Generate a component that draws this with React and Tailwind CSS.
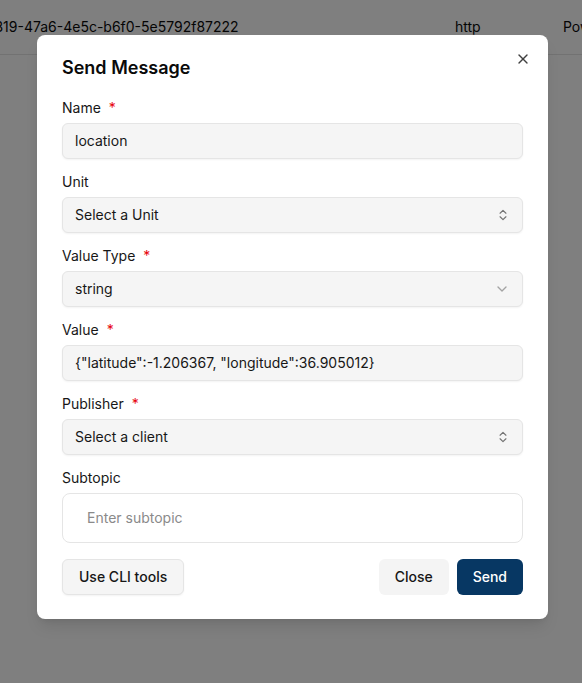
import React from 'react'
import { X, ChevronsUpDown, ChevronDown } from 'lucide-react'

function Label({ children, required }) {
  return (
    <label className="flex items-center gap-2 text-sm font-normal leading-5 text-[#171717]">
      {children}
      {required && <span className="text-red-600">*</span>}
    </label>
  )
}

function Field({ label, required, children }) {
  return (
    <div className="flex flex-col gap-[5px]">
      <Label required={required}>{label}</Label>
      {children}
    </div>
  )
}

function Box({ children, icon }) {
  return (
    <div className="flex h-9 items-center justify-between rounded-md border border-[#e5e5e5] bg-[#f5f5f5] px-3 text-sm text-[#171717] shadow-xs">
      <span>{children}</span>
      {icon}
    </div>
  )
}

export default function App() {
  return (
    <div className="relative h-[683px] w-[582px] overflow-hidden bg-white font-['Inter',sans-serif] text-[#0a0a0a]">
      {/* page behind the dialog */}
      <div className="flex h-[55px] items-center overflow-hidden border-b border-[#e5e5e5] text-sm">
        <span className="-ml-[47px] w-[300px] shrink-0 whitespace-nowrap">0a4c7319-47a6-4e5c-b6f0-5e5792f87222</span>
        <span className="ml-[202px] w-[108px] shrink-0">http</span>
        <span className="shrink-0 whitespace-nowrap">Power</span>
      </div>

      <div className="absolute inset-0 bg-black/50" />

      <div className="absolute left-[37px] top-[35px] w-[511px] rounded-lg bg-white px-[25px] pb-6 pt-[21px] shadow-lg">
        <button className="absolute right-[17px] top-[16px] text-[#404040]">
          <X size={16} strokeWidth={2} />
        </button>
        <h2 className="text-lg font-semibold leading-6 text-[#0a0a0a]">Send Message</h2>

        <div className="mt-[18px] flex flex-col gap-[13px]">
          <Field label="Name" required>
            <Box>location</Box>
          </Field>
          <Field label="Unit">
            <Box icon={<ChevronsUpDown size={14} className="text-[#737373]" />}>Select a Unit</Box>
          </Field>
          <Field label="Value Type" required>
            <Box icon={<ChevronDown size={16} className="text-[#a3a3a3]" />}>string</Box>
          </Field>
          <Field label="Value" required>
            <Box>{'{"latitude":-1.206367, "longitude":36.905012}'}</Box>
          </Field>
          <Field label="Publisher" required>
            <Box icon={<ChevronsUpDown size={14} className="text-[#737373]" />}>Select a client</Box>
          </Field>
          <Field label="Subtopic">
            <div className="flex h-[50px] items-center rounded-lg border border-[#e5e5e5] bg-white px-6 text-sm text-[#8a8a8a]">
              Enter subtopic
            </div>
          </Field>
        </div>

        <div className="mt-4 flex items-center justify-between">
          <button className="h-9 rounded-md border border-[#e5e5e5] bg-[#f5f5f5] px-4 text-sm font-medium text-[#171717] shadow-xs">
            Use CLI tools
          </button>
          <div className="flex gap-2">
            <button className="h-9 rounded-md bg-[#f4f4f4] px-4 text-sm font-medium text-[#171717]">Close</button>
            <button className="h-9 rounded-md bg-[#073763] px-4 text-sm font-medium text-white">Send</button>
          </div>
        </div>
      </div>
    </div>
  )
}
